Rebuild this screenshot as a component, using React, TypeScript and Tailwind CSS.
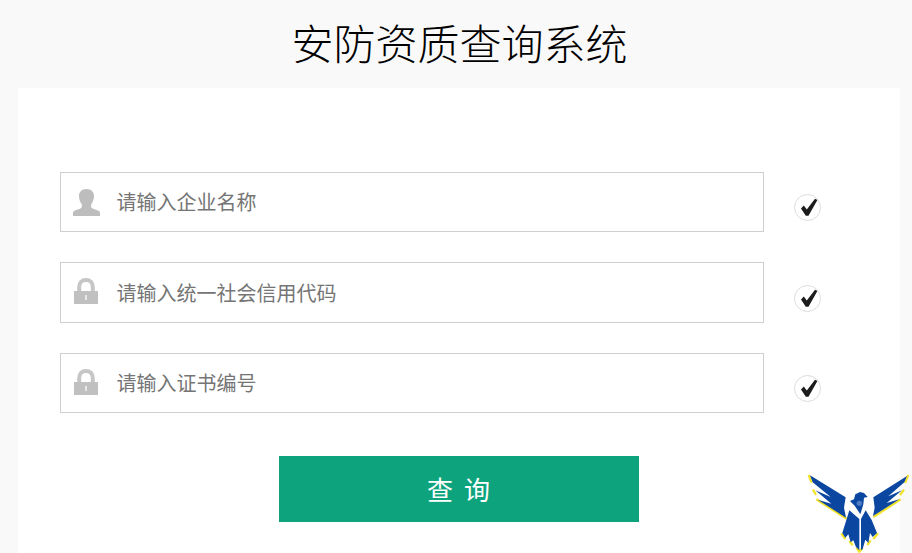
const fields = [
  { icon: 'user', placeholder: '请输入企业名称', height: 'h-[60px]', checkTop: 'mt-[22px]' },
  { icon: 'lock', placeholder: '请输入统一社会信用代码', height: 'h-[61px]', checkTop: 'mt-[23px]' },
  { icon: 'lock', placeholder: '请输入证书编号', height: 'h-[60px]', checkTop: 'mt-[22px]' },
]

function UserIcon() {
  return (
    <svg width="27" height="27" viewBox="0 0 27 27" fill="#bdbdbd" className="ml-[12px]">
      <path d="M13.500 0c4.600 0 7.500 2.800 7.500 7 0 3.600-1.300 6.600-2.800 8.300v2.400c0 1 .8 1.600 2.500 2.200l4.300 1.500c1.300.5 2 1.300 2 2.600V27H0v-3c0-1.300.7-2.100 2-2.600l4.300-1.500c1.700-.6 2.500-1.200 2.500-2.200v-2.400C7.300 13.600 6 10.600 6 7c0-4.200 2.900-7 7.500-7z" />
    </svg>
  )
}

function LockIcon() {
  return (
    <svg width="24" height="26" viewBox="0 0 24 26" className="mb-[3px] ml-[13px]">
      <path d="M5.200 14V9c0-4.400 2.600-7 6.800-7s6.800 2.600 6.800 7v5" fill="none" stroke="#c6c6c6" strokeWidth="4" />
      <rect x="0" y="13" width="24" height="13" fill="#c0c0c0" />
      <rect x="11" y="17" width="2" height="5" fill="#e8e8e8" />
    </svg>
  )
}

function CheckMark() {
  return (
    <svg width="25" height="25" viewBox="0 0 25 25" fill="#1c1c1c">
      <path d="M6 13.500 8.800 10.500 11.800 14.500 20 3.800 22.400 5 13.500 20.800H10.800Z" />
    </svg>
  )
}

function EagleLogo() {
  return (
    <svg className="absolute left-[780px] top-[465px]" width="132" height="88" viewBox="0 0 396 264">
      {/* yellow edges */}
      <g fill="none" stroke="#f2e32a" strokeWidth="7">
        <path d="M86 30 95 53" />
        <path d="M99 74 108 90" />
        <path d="M109 103 200 161" />
        <path d="M184 205 196 222" />
        <path d="M208 228 218 241" />
        <path d="M229 248 238 260 248 248" />
        <path d="M262 240 272 226" />
        <path d="M280 222 294 205" />
        <path d="M385 30 375 53" />
        <path d="M372 74 360 90" />
        <path d="M362 103 280 156" />
      </g>
      {/* wings */}
      <path d="M90 31 197 97 192 128 198 158 113 104 154 116 106 76 152 96 98 52Z" fill="#0b47a1" />
      <path d="M381 33 280 97 284 128 279 153 358 103 320 114 366 76 325 94 373 52Z" fill="#0b47a1" />
      {/* body */}
      <path d="M208 136 238 162 238 256 228 246 220 226 212 232 205 208 196 218 187 204Z" fill="#0b47a1" />
      <path d="M243 162 257 136 275 165 291 204 278 216 270 204 265 234 256 224 248 252 243 256Z" fill="#0b47a1" />
      {/* head */}
      <path d="M210 108 222 103 226 88 240 81 252 84 263 96 252 98 250 118 241 148 224 122Z" fill="#0b47a1" />
      <circle cx="238" cy="115" r="8" fill="#4f7cc0" />
    </svg>
  )
}

export default function App() {
  return (
    <div className="relative h-[553px] w-[912px] overflow-hidden bg-[#f9f9f9] font-['Liberation_Sans','Noto_Sans_CJK_SC',sans-serif]">
      <h1 className="h-[88px] pt-[19px] pl-[7px] text-center text-[42px] leading-[54px] font-light text-black">
        安防资质查询系统
      </h1>

      <div className="mr-[12px] ml-[18px] h-[465px] bg-white px-[42px] pt-[84px]">
        <div className="flex flex-col gap-[30px]">
          {fields.map((field) => (
            <div key={field.placeholder} className="flex items-start">
              <div className={`flex w-[704px] items-center border border-[#cfcfcf] bg-white ${field.height}`}>
                <div className="flex w-[55.5px]">
                  {field.icon === 'user' ? <UserIcon /> : <LockIcon />}
                </div>
                <input
                  readOnly
                  placeholder={field.placeholder}
                  className="flex-1 pt-[2px] text-[20px] text-[#757575] outline-none placeholder:text-[#757575]"
                />
              </div>
              <span className={`ml-[30px] flex h-[27px] w-[27px] items-center justify-center rounded-full border border-[#dcdcdc] bg-white ${field.checkTop}`}>
                <CheckMark />
              </span>
            </div>
          ))}
        </div>

        <div className="mt-[43px] flex justify-center pr-[1px]">
          <button className="h-[66px] w-[360px] bg-[#0ca37d] pt-[5px] pl-[2px] text-[26px] tracking-[2px] text-white">
            查 询
          </button>
        </div>
      </div>

      <EagleLogo />
    </div>
  )
}
